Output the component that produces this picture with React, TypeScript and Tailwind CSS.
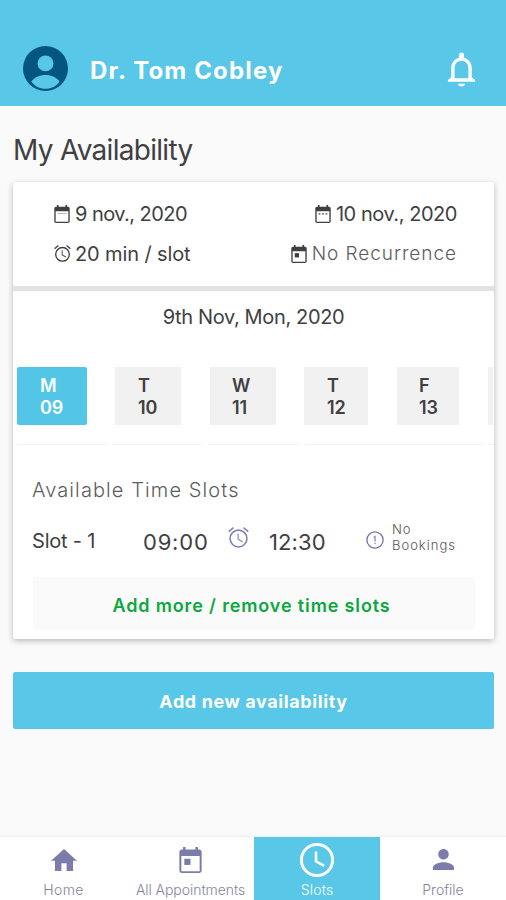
import type { ReactNode } from "react";

type IconProps = { className?: string };

function Glyph({ className, box = "0 0 24 24", children }: IconProps & { box?: string; children: ReactNode }) {
  return (
    <svg viewBox={box} className={`block shrink-0 ${className ?? ""}`} fill="currentColor" aria-hidden="true">
      {children}
    </svg>
  );
}

function AvatarIcon({ className }: IconProps) {
  return (
    <Glyph className={className} box="0 0 44 44">
      <circle cx="22" cy="22" r="22" fill="#04557f" />
      <circle cx="22" cy="17" r="7.8" fill="#58c7e8" />
      <path d="M8.200 35C10.700 30.600 16.200 28.300 22 28.300S33.300 30.600 35.800 35C32.600 39.300 27.600 41.900 22 41.900S11.400 39.300 8.200 35Z" fill="#58c7e8" />
    </Glyph>
  );
}

function BellIcon({ className }: IconProps) {
  return (
    <Glyph className={className} box="0 0 28 34">
      <path d="M14 33.500c1.900 0 3.300-1 3.300-2.700h-6.600c0 1.700 1.400 2.700 3.300 2.700Z" />
      <path
        fillRule="evenodd"
        d="M24 24.500V16c0-5.300-2.900-9.300-7.500-10.500V3a2.500 2.500 0 0 0-5 0v2.500C6.900 6.700 4 10.700 4 16v8.500L.8 27.300V29h26.400v-1.700L24 24.500ZM20.700 25.500H7.300V16c0-4.500 2.600-7.600 6.700-7.600s6.700 3.100 6.700 7.600v9.500Z"
      />
    </Glyph>
  );
}

function CalendarIcon({ className, mark }: IconProps & { mark: "line" | "dots" | "event" }) {
  return (
    <Glyph className={className} box="3 1 18 21">
      <path
        fillRule="evenodd"
        d="M19 3h-1V1h-2v2H8V1H6v2H5c-1.110 0-2 .9-2 2v15c0 1.100.89 2 2 2h14c1.100 0 2-.9 2-2V5c0-1.100-.9-2-2-2Zm.4 17.500H4.600V8.300h14.800v12.200Z"
      />
      {mark === "line" && <path d="M6.500 10.300h11v.9h-11z" opacity=".5" />}
      {mark === "dots" && <path d="M7 10.500h2v1.600H7zM11 10.500h2v1.600h-2zM15 10.500h2v1.600h-2z" />}
      {mark === "event" && <path d="M7 10.500h5v5H7z" />}
    </Glyph>
  );
}

function AlarmIcon({ className }: IconProps) {
  return (
    <Glyph className={className} box="2 1.800 20 20.400">
      <path d="M12.300 8H11v6l4.700 2.800.7-1.200-4.100-2.400V8Z" opacity=".85" />
      <path d="m22 5.700-4.600-3.860-1 1.200 4.600 3.860L22 5.700ZM7.600 3.050 6.600 1.850 2 5.700l1 1.200L7.600 3.050Z" />
      <path
        fillRule="evenodd"
        d="M12 4a9 9 0 1 0 0 18 9 9 0 0 0 0-18Zm0 16.400a7.400 7.400 0 1 1 0-14.800 7.400 7.400 0 0 1 0 14.800Z"
      />
    </Glyph>
  );
}

function InfoIcon({ className }: IconProps) {
  return (
    <Glyph className={className} box="0 0 18 18">
      <circle cx="9" cy="9" r="8.100" fill="none" stroke="currentColor" strokeWidth="1.300" />
      <path d="M8.300 4.800h1.500v5.600H8.300zM8.300 11.700h1.500v1.500H8.300zM7.200 5.500h1.100v1H7.200z" opacity=".75" />
    </Glyph>
  );
}

function HomeIcon({ className }: IconProps) {
  return (
    <Glyph className={className} box="2 3 20 17">
      <path d="M10 20v-6h4v6h5v-8h3L12 3 2 12h3v8z" />
    </Glyph>
  );
}

function ClockIcon({ className }: IconProps) {
  return (
    <Glyph className={className} box="0 0 36 36">
      <circle cx="18" cy="18" r="15.600" fill="none" stroke="currentColor" strokeWidth="3" />
      <path d="M17 9.500V19.300l8.200 4.500" fill="none" stroke="currentColor" strokeWidth="2.600" />
    </Glyph>
  );
}

function PersonIcon({ className }: IconProps) {
  return (
    <Glyph className={className} box="4 4 16 16">
      <path d="M12 12c2.210 0 4-1.790 4-4s-1.790-4-4-4-4 1.790-4 4 1.790 4 4 4Zm0 2c-2.670 0-8 1.340-8 4v2h16v-2c0-2.660-5.330-4-8-4Z" />
    </Glyph>
  );
}

const days = [
  { day: "M", date: "09", tile: "ml-1 w-[70px] rounded-[2px] bg-[#53c6e8] pl-[23px] text-white", rule: "w-[91px] ml-1" },
  { day: "T", date: "10", tile: "ml-[28px] w-[66px] bg-[#f1f1f1] pl-[23px]", rule: "w-[90px] ml-1" },
  { day: "W", date: "11", tile: "ml-[29px] w-[66px] bg-[#f1f1f1] pl-[22px]", rule: "w-[92px] ml-1.5" },
  { day: "T", date: "12", tile: "ml-[28px] w-[64px] bg-[#f1f1f1] pl-[23px]", rule: "w-[179px] ml-[5px]" },
  { day: "F", date: "13", tile: "ml-[29px] w-[62px] bg-[#f1f1f1] pl-[22px]", rule: "w-[6px] ml-1" },
];

function NavItem({ label, icon, active, text }: { label: string; icon: ReactNode; active?: boolean; text: string }) {
  return (
    <a
      className={`flex flex-col items-center text-sm leading-4 ${
        active ? "bg-[#58c7e8] text-white" : "text-[#85859a]"
      }`}
    >
      <span className={`flex h-[45px] items-center ${active ? "text-white" : "text-[#7b7ca9]"}`}>{icon}</span>
      <span className={`whitespace-nowrap ${text}`}>{label}</span>
    </a>
  );
}

export default function App() {
  return (
    <div className="flex h-[900px] w-[506px] flex-col overflow-hidden bg-[#fafafa] font-['Inter',sans-serif] text-[#404042]">
      <header className="flex h-[106px] shrink-0 items-end bg-[#58c7e8] pr-[30px] pb-[15px] pl-[23px] text-white">
        <AvatarIcon className="size-[45px]" />
        <h1 className="ml-[22px] pb-1 text-2xl leading-8 font-bold tracking-[1.15px]">Dr. Tom Cobley</h1>
        <BellIcon className="mb-1 ml-auto h-[35px] w-[29px]" />
      </header>

      <main className="flex grow flex-col pr-3 pl-[13px]">
        <h2 className="mt-[25px] h-[51px] text-[28px] leading-[38px] tracking-[-0.7px]">My Availability</h2>

        <div className="flex h-[457px] shrink-0 flex-col gap-[5px] rounded-[2px] bg-[#e2e2e2] shadow-[0_2px_6px_rgba(0,0,0,0.26)]">
          <section className="h-[104px] rounded-[2px] bg-white pt-[18px] pr-[37px] pl-[41px] text-xl leading-7">
            <div className="flex justify-between">
              <span className="flex items-center tracking-[-0.55px]">
                <CalendarIcon mark="line" className="mr-[5px] h-[18px] w-4" />9 nov., 2020
              </span>
              <span className="flex items-center tracking-[-0.45px]">
                <CalendarIcon mark="dots" className="mr-[5px] h-[18px] w-4" />10 nov., 2020
              </span>
            </div>
            <div className="mt-[11px] flex justify-between">
              <span className="flex items-center tracking-[-0.12px]">
                <AlarmIcon className="mr-1 size-[17px]" />20 min / slot
              </span>
              <span className="flex items-center text-[19px] font-light tracking-[0.95px] text-[#5c5c5c]">
                <CalendarIcon mark="event" className="mr-[5px] h-[18px] w-4 text-[#404042]" />
                <span className="pt-px">No Recurrence</span>
              </span>
            </div>
          </section>

          <section className="grow rounded-[2px] bg-white">
            <h3 className="pt-3 text-center text-xl leading-7 tracking-[-0.35px]">9th Nov, Mon, 2020</h3>

            <div className="mt-9 flex overflow-hidden text-lg leading-[22px] font-semibold">
              {days.map(({ day, date, tile }) => (
                <div key={date} className={`flex h-[58px] shrink-0 flex-col justify-center pt-px ${tile}`}>
                  <span>{day}</span>
                  <span>{date}</span>
                </div>
              ))}
              <div className="ml-[29px] h-[58px] w-[5px] bg-[#f1f1f1]" />
            </div>
            <div className="mt-[19px] flex">
              {days.map(({ date, rule }) => (
                <span key={date} className={`h-px shrink-0 bg-[#f3f3f3] ${rule}`} />
              ))}
            </div>

            <h4 className="mt-[31px] ml-[19px] text-xl leading-7 font-light tracking-[1.1px] text-[#5c5c5c]">
              Available Time Slots
            </h4>
            <div className="mt-4 ml-[19px] flex h-[40px] items-center whitespace-nowrap">
              <span className="w-[111px] pt-px text-xl leading-7 tracking-[-0.2px]">Slot - 1</span>
              <span className="w-[85px] pt-[3px] text-[22px] leading-7 tracking-[0.8px]">09:00</span>
              <AlarmIcon className="mb-[6px] size-[21px] text-[#8283b5]" />
              <span className="ml-5 w-[97px] pt-[3px] text-[22px] leading-7 tracking-[0.1px]">12:30</span>
              <InfoIcon className="size-[18px] text-[#7476a8]" />
              <span className="ml-2 pb-[7px] text-[13px] leading-4 font-light tracking-[1px] text-[#555]">
                No
                <br />
                Bookings
              </span>
            </div>
            <button className="mt-[17px] ml-5 block h-[53px] w-[442px] bg-[#fafafa] pt-1 pr-[5px] text-lg font-semibold tracking-[0.86px] text-[#0aa83f]">
              Add more / remove time slots
            </button>
          </section>
        </div>

        <button className="mt-[33px] h-[57px] shrink-0 rounded-[2px] bg-[#58c7e8] pt-0.5 text-lg font-bold tracking-[0.6px] text-white">
          Add new availability
        </button>
      </main>

      <nav className="grid h-[63px] shrink-0 grid-cols-[127px_127px_126px_126px] bg-white shadow-[0_-1px_2px_rgba(0,0,0,0.06)]">
        <NavItem label="Home" text="font-light tracking-[0.4px]" icon={<HomeIcon className="h-[22px] w-[26px]" />} />
        <NavItem
          label="All Appointments"
          text="font-light tracking-[-0.05px]"
          icon={<CalendarIcon mark="event" className="h-[26px] w-[23px]" />}
        />
        <NavItem active label="Slots" text="font-light tracking-[0.2px]" icon={<ClockIcon className="size-[36px]" />} />
        <NavItem label="Profile" text="font-light tracking-[0px]" icon={<PersonIcon className="size-[21px]" />} />
      </nav>
    </div>
  );
}
